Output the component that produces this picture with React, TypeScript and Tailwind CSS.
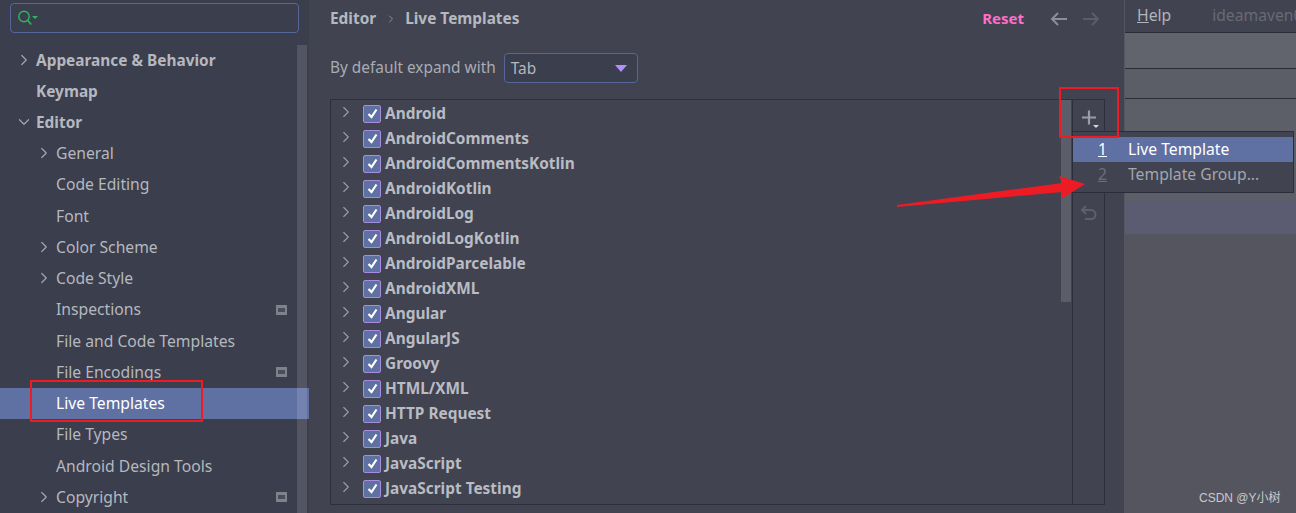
import React from "react";
import { ChevronDown, ChevronRight } from "lucide-react";

const font = { fontFamily: '"Noto Sans", "Open Sans", sans-serif' };

type NavItem = {
  label: string;
  bold?: boolean;
  depth: number;
  arrow?: "right" | "down";
  badge?: boolean;
  selected?: boolean;
};

const navItems: NavItem[] = [
  { label: "Appearance & Behavior", bold: true, depth: 0, arrow: "right" },
  { label: "Keymap", bold: true, depth: 0 },
  { label: "Editor", bold: true, depth: 0, arrow: "down" },
  { label: "General", depth: 1, arrow: "right" },
  { label: "Code Editing", depth: 1 },
  { label: "Font", depth: 1 },
  { label: "Color Scheme", depth: 1, arrow: "right" },
  { label: "Code Style", depth: 1, arrow: "right" },
  { label: "Inspections", depth: 1, badge: true },
  { label: "File and Code Templates", depth: 1 },
  { label: "File Encodings", depth: 1, badge: true },
  { label: "Live Templates", depth: 1, selected: true },
  { label: "File Types", depth: 1 },
  { label: "Android Design Tools", depth: 1 },
  { label: "Copyright", depth: 1, arrow: "right", badge: true },
];

const groups = [
  "Android",
  "AndroidComments",
  "AndroidCommentsKotlin",
  "AndroidKotlin",
  "AndroidLog",
  "AndroidLogKotlin",
  "AndroidParcelable",
  "AndroidXML",
  "Angular",
  "AngularJS",
  "Groovy",
  "HTML/XML",
  "HTTP Request",
  "Java",
  "JavaScript",
  "JavaScript Testing",
];

const SearchIcon = () => (
  <svg width="22" height="16" viewBox="0 0 22 16" fill="none">
    <circle cx="7" cy="6.5" r="5.2" stroke="#2fb65f" strokeWidth="1.4" />
    <path d="M10.8 10.5L14.2 14.5" stroke="#2fb65f" strokeWidth="1.6" />
    <path d="M15 6h6l-3 3z" fill="#2fb65f" />
  </svg>
);

const BadgeIcon = () => (
  <svg width="11" height="10" viewBox="0 0 11 10">
    <rect x="0" y="0" width="11" height="10" fill="#7f828c" />
    <rect x="2" y="3" width="7" height="4" fill="#4b4d59" />
  </svg>
);

const NavRow = ({ item }: { item: NavItem }) => (
  <div
    className={
      item.selected
        ? "flex h-[31.25px] shrink-0 items-center bg-[#5f70a3] text-white"
        : "flex h-[31.25px] shrink-0 items-center text-[#b5b8bf]"
    }
  >
    <div className={item.depth === 0 ? "w-9 shrink-0 pl-[15px]" : "w-14 shrink-0 pl-[35px]"}>
      {item.arrow === "right" && (
        <ChevronRight size={18} strokeWidth={1.6} className="text-[#a3a6ad]" />
      )}
      {item.arrow === "down" && (
        <ChevronDown size={18} strokeWidth={1.6} className="text-[#a3a6ad]" />
      )}
    </div>
    <span
      className={
        item.bold
          ? "flex-1 pt-px text-[15.4px] font-bold"
          : "flex-1 pt-px text-[15.7px]"
      }
    >
      {item.label}
    </span>
    {item.badge && (
      <div className="mr-[22px]">
        <BadgeIcon />
      </div>
    )}
  </div>
);

const GroupRow = ({ name }: { name: string }) => (
  <div className="flex h-[25px] shrink-0 items-center">
    <div className="w-8 shrink-0 pb-1 pl-[6px]">
      <ChevronRight size={18} strokeWidth={1.5} className="text-[#9a9da5]" />
    </div>
    <div className="flex h-[18px] w-[18px] shrink-0 items-center justify-center rounded-[2px] border border-[#a98be0] bg-[#5f70a3]">
      <svg width="13" height="13" viewBox="0 0 13 13" fill="none">
        <path d="M2.5 7l3 3 5-7.5" stroke="#fff" strokeWidth="2.2" />
      </svg>
    </div>
    <span className="ml-[4px] text-[15.4px] font-bold text-[#b9bcc3]">{name}</span>
  </div>
);

export default function App() {
  return (
    <div className="relative flex h-[513px] w-[1296px] overflow-hidden bg-[#414350]" style={font}>
      {/* sidebar */}
      <aside className="relative flex w-[309px] shrink-0 flex-col bg-[#3b3e4c]">
        <div className="px-[10px] pt-[3px]">
          <div className="flex h-[30px] w-[289px] items-center rounded-[4px] border-[1.5px] border-[#56669a] pl-[6px]">
            <SearchIcon />
          </div>
        </div>
        <div className="mt-[11px] flex flex-col">
          {navItems.map((item) => (
            <NavRow key={item.label} item={item} />
          ))}
        </div>
        <div className="absolute top-[45px] right-[2px] bottom-0 w-[10px] bg-[#ffffff20]" />
      </aside>

      {/* main settings panel */}
      <main className="flex w-[815px] shrink-0 flex-col pl-[21px]">
        <div className="flex h-[37px] shrink-0 items-center text-[15.4px] font-bold text-[#b5b8bf]">
          <span>Editor</span>
          <ChevronRight size={12} strokeWidth={1.5} className="mx-[8.5px] text-[#a3a6ad]" />
          <span>Live Templates</span>
          <span className="ml-auto text-[15px] text-[#ff6ec7]">Reset</span>
          <div className="mr-[24px] ml-[26px] flex gap-[14px]">
            <svg width="18" height="14" viewBox="0 0 18 14" fill="none" stroke="#8b8e96" strokeWidth="2">
              <path d="M17 7H2M8 1L2 7l6 6" />
            </svg>
            <svg width="18" height="14" viewBox="0 0 18 14" fill="none" stroke="#5c5e67" strokeWidth="2">
              <path d="M1 7h15M10 1l6 6-6 6" />
            </svg>
          </div>
        </div>
        <div className="mt-[16px] flex h-[30px] shrink-0 items-center">
          <span className="text-[15.4px] text-[#a9acb4]">By default expand with</span>
          <div className="ml-[8px] flex h-[30px] w-[134px] items-center justify-between rounded-[4px] border-[1.5px] border-[#56669a] bg-[#3b3e4c] pr-[10px] pl-[6px]">
            <span className="pt-px text-[15.4px] text-[#b5b8bf]">Tab</span>
            <svg width="12" height="7" viewBox="0 0 12 7">
              <path d="M0 0h12L6 7z" fill="#b48eff" />
            </svg>
          </div>
        </div>
        <div className="mt-[16px] flex h-[406px] w-[775px] shrink-0 border border-[#2d2f3c]">
          <div className="relative flex-1 overflow-hidden pt-px">
            {groups.map((g) => (
              <GroupRow key={g} name={g} />
            ))}
            <div className="absolute top-0 right-px h-[202px] w-[10px] bg-[#5b5e68]" />
          </div>
          <div className="flex w-[32px] shrink-0 flex-col items-center border-l border-[#2d2f3c]">
            <div className="relative mt-[9px] ml-[2px] h-[22px] w-[18px]">
              <svg width="18" height="20" viewBox="0 0 18 20" fill="none">
                <path d="M8 1.5v14M1 8.5h14" stroke="#9a9da5" strokeWidth="2.2" />
                <path d="M12 16h6l-3 3z" fill="#d5d6da" />
              </svg>
            </div>
            <div className="mt-[73px]">
              <svg width="18" height="18" viewBox="0 0 18 18" fill="none" stroke="#5e6069" strokeWidth="2">
                <path d="M6 2L2 6l4 4M2 6h9a4.5 4.5 0 010 9H5" />
              </svg>
            </div>
          </div>
        </div>
      </main>

      {/* what shows behind the settings window */}
      <section className="flex flex-1 flex-col border-l border-[#55565f] bg-[#54555e]">
        <div className="flex h-[33px] shrink-0 items-center border-b border-[#2b2c35] bg-[#414350] pl-[12px] text-[15.7px]">
          <span className="text-[#b1b3ba]">
            <span className="underline">H</span>elp
          </span>
          <span className="ml-[41px] whitespace-nowrap text-[#686a74]">ideamaven0</span>
        </div>
        <div className="h-[36px] shrink-0 border-b border-[#2b2c35] bg-[#62646d]" />
        <div className="h-[30px] shrink-0 border-b border-[#2b2c35] bg-[#5c5e67]" />
        <div className="h-[102px] shrink-0 bg-[#5d5f68]" />
        <div className="h-[33px] shrink-0 bg-[#5b5c72]" />
        <div className="flex-1" />
      </section>

      {/* add popup */}
      <div className="absolute top-[131px] left-[1072px] h-[62px] w-[222px] border border-[#2b2d3a] bg-[#414350] pt-[5px] text-[15.7px]">
        <div className="flex h-[25px] items-center bg-[#5f70a3] text-white">
          <span className="ml-[25px] w-[30px] underline">1</span>
          <span>Live Template</span>
        </div>
        <div className="flex h-[25px] items-center text-[#a3a6ad]">
          <span className="ml-[25px] w-[30px] text-[#6d6f79] underline">2</span>
          <span>Template Group...</span>
        </div>
      </div>

      {/* red annotations */}
      <div className="absolute top-[380px] left-[30px] h-[42px] w-[173px] border-2 border-[#ed1c24]" />
      <div className="absolute top-[87px] left-[1059px] h-[51px] w-[60px] border-2 border-[#ed1c24]" />
      <svg className="absolute top-[170px] left-[890px]" width="200" height="45" viewBox="0 0 200 45">
        <path d="M7 35L172 13l-3-7 26 8-24 15 1-7L7 37z" fill="#ed1c24" />
      </svg>

      <div
        className="absolute top-[489px] left-[1199px] text-[12px] whitespace-nowrap text-[#c9cace]"
        style={{ fontFamily: '"Liberation Sans", "Noto Sans CJK SC", sans-serif' }}
      >
        CSDN @Y小树
      </div>
    </div>
  );
}
